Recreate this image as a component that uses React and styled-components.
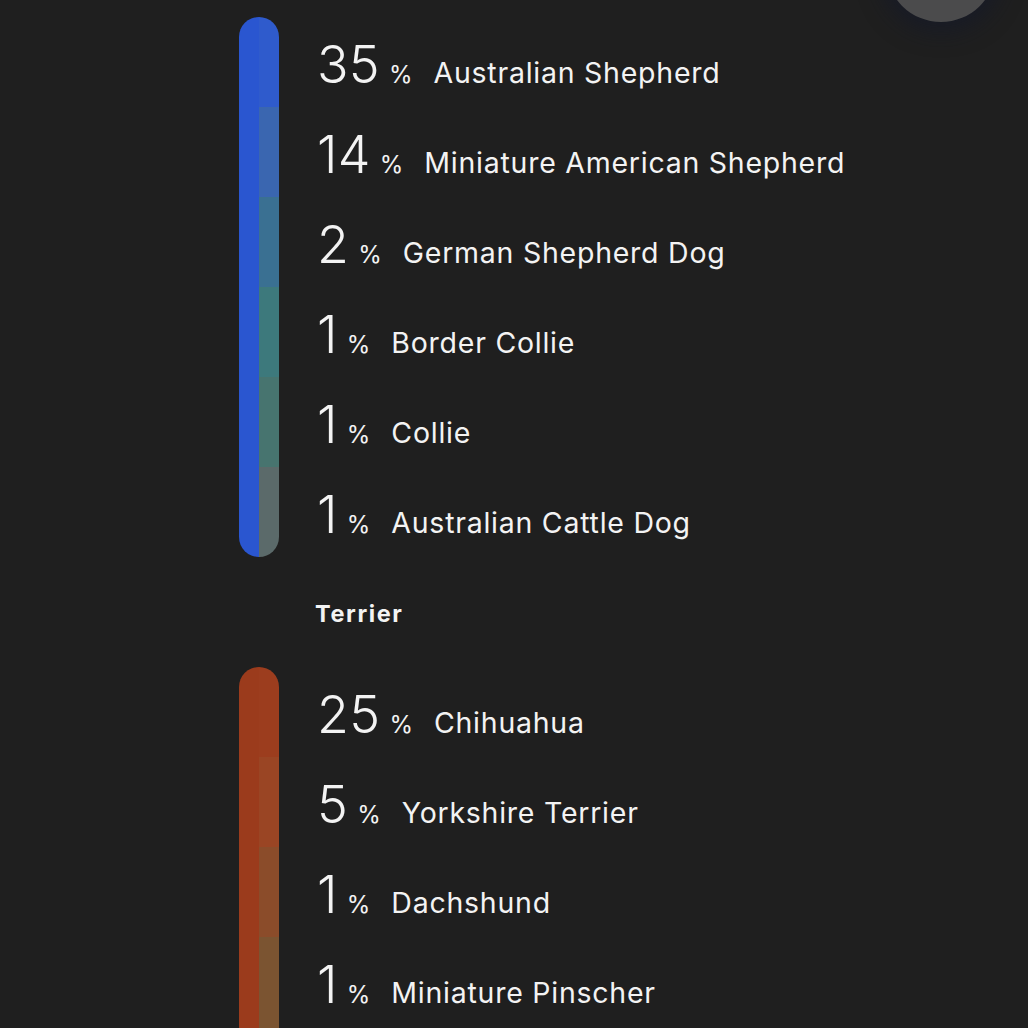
import React from "react";
import styled, { createGlobalStyle } from "styled-components";

const Global = createGlobalStyle`
  html, body { margin: 0; padding: 0; background: #1f1f1f; }
  body { overflow: hidden; font-family: Inter, "Liberation Sans", sans-serif; color: #f3f3f3; }
`;

const Page = styled.div`
  position: relative;
  width: 1028px;
  height: 1028px;
  overflow: hidden;
  background: #1f1f1f;
  box-sizing: border-box;
  padding: 17px 0 0 239px;
`;

const FloatButton = styled.div`
  position: absolute;
  left: 886px;
  top: -88px;
  width: 110px;
  height: 110px;
  border-radius: 50%;
  background: #4b4b4c;
  box-shadow: 0 4px 22px 6px rgba(18, 24, 44, 0.55);
`;

const Group = styled.section`
  display: flex;
  gap: 40px;
`;

const Bar = styled.div`
  width: 40px;
  border-radius: 20px;
  overflow: hidden;
  display: flex;
  flex-shrink: 0;
  align-self: flex-start;
`;

const BarBase = styled.div`
  flex: 1;
  background: ${(p) => p.$color};
`;

const BarSegments = styled.div`
  flex: 1;
  display: flex;
  flex-direction: column;
`;

const Segment = styled.div`
  height: 90px;
  background: ${(p) => p.$color};
`;

const List = styled.div`
  display: flex;
  flex-direction: column;
`;

const Row = styled.div`
  height: 90px;
  display: flex;
  align-items: baseline;
  white-space: nowrap;
`;

const Num = styled.span`
  font-size: 52px;
  font-weight: 300;
  line-height: 1;
  padding-top: 22px;
  margin-left: -2px;
  letter-spacing: 0.3px;
`;

const Pct = styled.span`
  font-size: 24px;
  font-weight: 400;
  margin-left: 9px;
`;

const Name = styled.span`
  font-size: 28.5px;
  font-weight: 400;
  margin-left: 21px;
  letter-spacing: 0.75px;
`;

const GroupLabel = styled.div`
  margin: 45px 0 42px 76px;
  font-size: 23.5px;
  line-height: 23px;
  font-weight: 700;
  letter-spacing: 1.6px;
`;

const groups = [
  {
    base: "#2a56d0",
    items: [
      { pct: 35, name: "Australian Shepherd", color: "#2f5bcc" },
      { pct: 14, name: "Miniature American Shepherd", color: "#3a66b0" },
      { pct: 2, name: "German Shepherd Dog", color: "#3a7092" },
      { pct: 1, name: "Border Collie", color: "#3d797c" },
      { pct: 1, name: "Collie", color: "#47746f" },
      { pct: 1, name: "Australian Cattle Dog", color: "#5b6a6a" },
    ],
  },
  {
    label: "Terrier",
    base: "#9b3b1c",
    continues: true,
    items: [
      { pct: 25, name: "Chihuahua", color: "#9c3d1e" },
      { pct: 5, name: "Yorkshire Terrier", color: "#9a4524" },
      { pct: 1, name: "Dachshund", color: "#8b4c2a" },
      { pct: 1, name: "Miniature Pinscher", color: "#7b5431" },
    ],
  },
];

function BreedGroup({ group }) {
  const last = group.items[group.items.length - 1];
  return (
    <Group>
      <Bar>
        <BarBase $color={group.base} />
        <BarSegments>
          {group.items.map((it, i) => (
            <Segment key={i} $color={it.color} />
          ))}
          {group.continues && <Segment $color={last.color} />}
        </BarSegments>
      </Bar>
      <List>
        {group.items.map((it, i) => (
          <Row key={i}>
            <Num>{it.pct}</Num>
            <Pct>%</Pct>
            <Name>{it.name}</Name>
          </Row>
        ))}
      </List>
    </Group>
  );
}

export default function App() {
  return (
    <>
      <Global />
      <Page>
        <FloatButton />
        {groups.map((g, i) => (
          <React.Fragment key={i}>
            {g.label && <GroupLabel>{g.label}</GroupLabel>}
            <BreedGroup group={g} />
          </React.Fragment>
        ))}
      </Page>
    </>
  );
}
